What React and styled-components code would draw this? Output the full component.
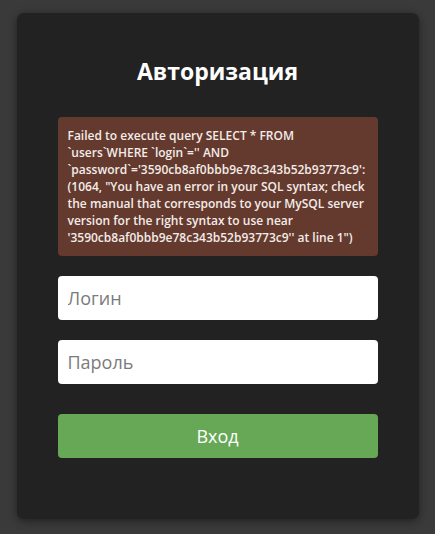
import React from "react";
import styled, { createGlobalStyle } from "styled-components";

const Global = createGlobalStyle`
  html, body { margin: 0; padding: 0; background: #3a3a3a; }
  body { font-family: "Open Sans", "Noto Sans", sans-serif; }
  * { box-sizing: border-box; }
`;

const Page = styled.div`
  min-height: 534px;
  padding-top: 13px;
  display: flex;
  justify-content: center;
  align-items: flex-start;
`;

const Card = styled.form`
  width: 402px;
  background: #222222;
  border-radius: 7px;
  box-shadow: 0 2px 8px rgba(0, 0, 0, 0.45);
  padding: 44px 41px 61px;
  display: flex;
  flex-direction: column;
`;

const Title = styled.h2`
  margin: 0 0 32px;
  font-size: 23px;
  line-height: 28px;
  font-weight: 700;
  color: #ffffff;
  text-align: center;
`;

const ErrorBox = styled.div`
  background: #653a2e;
  border-radius: 4px;
  padding: 10px 4px 10px 10px;
  color: #f3ece9;
  font-size: 12px;
  line-height: 17px;
  font-weight: 600;
  margin-bottom: 20px;
`;

const Input = styled.input`
  height: 44px;
  width: 100%;
  border: none;
  border-radius: 4px;
  background: #ffffff;
  padding: 0 10px;
  font-family: inherit;
  font-size: 18px;
  color: #333;
  margin-bottom: ${(p) => p.$gap}px;
  outline: none;
  &::placeholder { color: #7b7b7b; }
`;

const Button = styled.button`
  height: 44px;
  width: 100%;
  border: none;
  border-radius: 4px;
  background: #66a855;
  color: #ffffff;
  font-family: inherit;
  font-size: 18px;
  cursor: pointer;
`;

export default function App() {
  return (
    <>
      <Global />
      <Page>
        <Card onSubmit={(e) => e.preventDefault()}>
          <Title>Авторизация</Title>
          <ErrorBox>
            Failed to execute query SELECT * FROM `users`WHERE `login`='' AND
            `password`='3590cb8af0bbb9e78c343b52b93773c9': (1064, "You have an
            error in your SQL syntax; check the manual that corresponds to your
            MySQL server version for the right syntax to use near
            '3590cb8af0bbb9e78c343b52b93773c9'' at line 1")
          </ErrorBox>
          <Input $gap={20} placeholder="Логин" />
          <Input $gap={30} type="password" placeholder="Пароль" />
          <Button type="submit">Вход</Button>
        </Card>
      </Page>
    </>
  );
}
